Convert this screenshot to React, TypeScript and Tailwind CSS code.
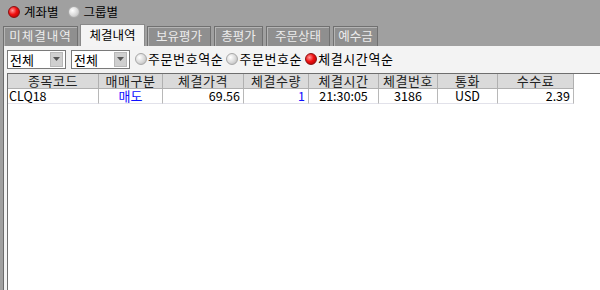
import React from "react"

const tabs = ["미체결내역", "체결내역", "보유평가", "총평가", "주문상태", "예수금"]

const columns = [
  { label: "종목코드", w: "w-[91px]" },
  { label: "매매구분", w: "w-[64px]" },
  { label: "체결가격", w: "w-[81px]" },
  { label: "체결수량", w: "w-[65px]" },
  { label: "체결시간", w: "w-[70px]" },
  { label: "체결번호", w: "w-[59px]" },
  { label: "통화", w: "w-[60px]" },
  { label: "수수료", w: "w-[76px]" },
]

function Radio({ on }: { on: boolean }) {
  return (
    <span
      className={`inline-block shrink-0 w-[12px] h-[12px] rounded-full border ${
        on
          ? "border-[#8a1010] bg-[radial-gradient(circle_at_35%_35%,#ff9a9a_0%,#f01010_45%,#a00000_100%)]"
          : "border-[#a8a8a8] bg-[radial-gradient(circle_at_35%_35%,#ffffff_0%,#d8d8d8_55%,#b0b0b0_100%)]"
      }`}
    />
  )
}

function Combo() {
  return (
    <div className="flex items-center w-[59px] h-[19px] bg-white border border-[#7a7a7a]">
      <span className="flex-1 pl-[2px] text-black text-[13px] leading-[17px]">전체</span>
      <span className="flex items-center justify-center w-[13px] h-[15px] mr-[2px] bg-[#cfcfcf] border border-[#b8b8b8]">
        <svg width="7" height="4" viewBox="0 0 7 4">
          <path d="M0 0h7L3.5 4z" fill="#555" />
        </svg>
      </span>
    </div>
  )
}

const cell = "flex items-center border-r border-b border-r-[#b8b8b8] border-b-[#e2e2ea]"

export default function App() {
  return (
    <div
      className="w-[600px] h-[290px] bg-[#a0a0a0] flex flex-col overflow-hidden text-[12px]"
      style={{ fontFamily: '"Noto Sans CJK KR", "Noto Sans", sans-serif' }}
    >
      {/* 상단 라디오 */}
      <div className="h-[24px] flex items-center pl-[8px] gap-[4px] text-black text-[12.5px]">
        <Radio on />
        <span className="mr-[5px]">계좌별</span>
        <Radio on={false} />
        <span>그룹별</span>
      </div>

      {/* 탭 */}
      <div className="h-[22px] flex items-end pl-[3px] gap-[3px]">
        {tabs.map((t, i) =>
          i === 1 ? (
            <div
              key={t}
              className="h-[22px] w-[65px] -ml-[1px] -mr-[1px] flex items-center justify-center bg-[#f4f4f4] border border-b-0 border-[#8a8a8a] text-black text-[12.5px]"
            >
              {t}
            </div>
          ) : (
            <div
              key={t}
              className={`h-[20px] flex items-center justify-center bg-[#8f8f8f] border border-b-0 border-[#707070] shadow-[inset_1px_1px_0_#b4b4b4] text-[#ececec] text-[12.5px] ${
                i === 0 ? "w-[75px] tracking-[1px]" : i === 3 ? "w-[49px]" : i === 5 ? "w-[45px]" : "w-[64px]"
              }`}
            >
              {t}
            </div>
          ),
        )}
      </div>

      {/* 패널 */}
      <div className="flex-1 ml-[3px] bg-[#f3f3f3] border-l border-[#6a6a6a] pl-[3px] pt-[3px] flex flex-col">
        <div className="h-[20px] flex items-center gap-[3px] text-black text-[13px]">
          <Combo />
          <span className="ml-[2px]">
            <Combo />
          </span>
          <span className="ml-[2px] flex items-center gap-[1px] tracking-[0.6px]">
            <Radio on={false} />
            주문번호역순
          </span>
          <span className="flex items-center gap-[1px] tracking-[0.6px]">
            <Radio on={false} />
            주문번호순
          </span>
          <span className="flex items-center gap-[1px] tracking-[0.6px]">
            <Radio on />
            체결시간역순
          </span>
        </div>

        <div className="mt-[4px] flex-1 bg-white border-l border-t border-[#6e6e6e]">
          <div className="flex h-[15px]">
            {columns.map((c) => (
              <div
                key={c.label}
                className={`${c.w} flex items-center justify-center bg-[#dadada] border-r border-b border-[#b0b0b0] text-[#222] text-[13px] leading-[14px] tracking-[0.5px]`}
              >
                {c.label}
              </div>
            ))}
          </div>
          <div className="flex h-[15px] text-black text-[12.5px] leading-[14px]">
            <div className={`w-[91px] pl-[1px] ${cell}`}>CLQ18</div>
            <div className={`w-[64px] justify-center text-[13px] text-[#1010ff] ${cell}`}>매도</div>
            <div className={`w-[81px] justify-end pr-[3px] ${cell}`}>69.56</div>
            <div className={`w-[65px] justify-end pr-[3px] text-[#1010ff] ${cell}`}>1</div>
            <div className={`w-[70px] justify-center ${cell}`}>21:30:05</div>
            <div className={`w-[59px] justify-center ${cell}`}>3186</div>
            <div className={`w-[60px] justify-center ${cell}`}>USD</div>
            <div className={`w-[76px] justify-end pr-[3px] ${cell}`}>2.39</div>
          </div>
        </div>
      </div>
    </div>
  )
}
